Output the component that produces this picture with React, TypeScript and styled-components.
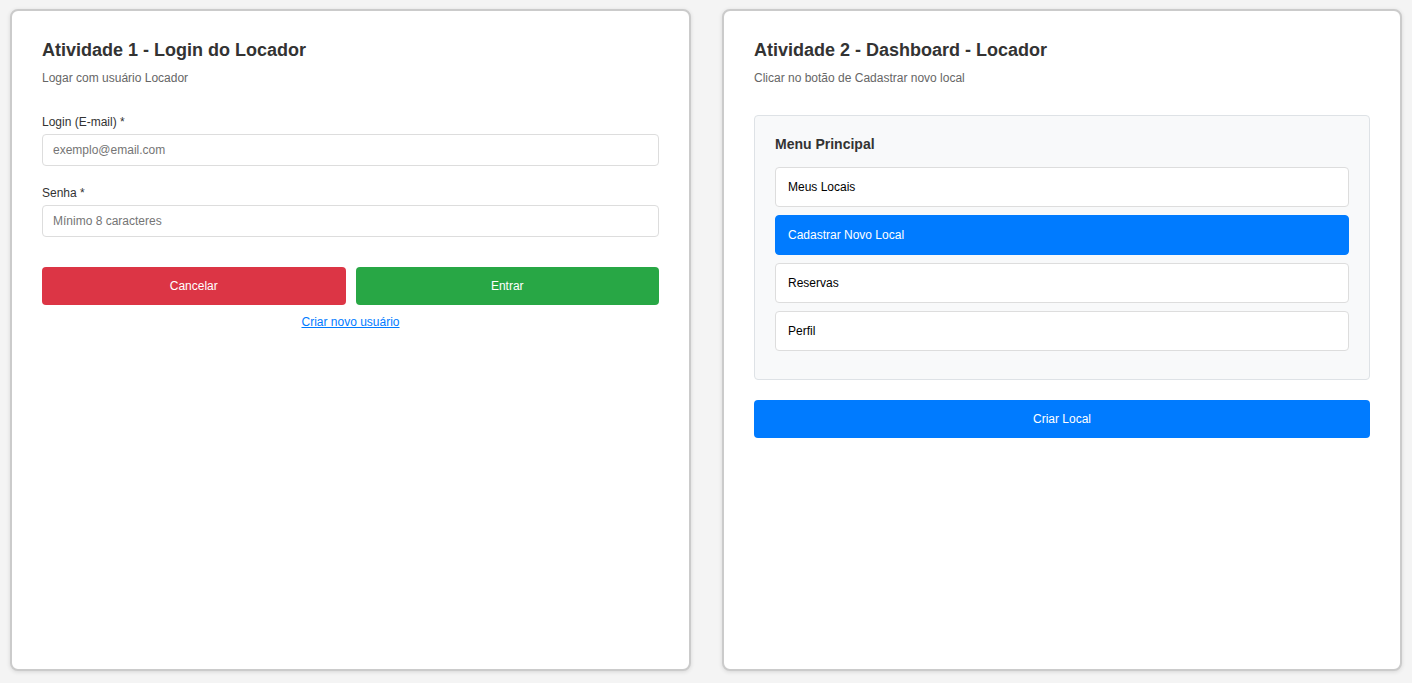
import React from "react";
import styled, { createGlobalStyle } from "styled-components";

const GlobalStyle = createGlobalStyle`
  * { box-sizing: border-box; }
  html, body { margin: 0; padding: 0; background: #f4f4f4; }
  body { font-family: "Liberation Sans", Arial, sans-serif; }
`;

const Page = styled.div`
  display: grid;
  grid-template-columns: 681px 1fr;
  gap: 31px;
  padding: 9px 10px 12px;
  height: 683px;
`;

const Card = styled.section`
  background: #fff;
  border: 2px solid #cbcbcb;
  border-radius: 8px;
  box-shadow: 0 1px 4px rgba(0, 0, 0, 0.12);
  padding: 30px;
  display: flex;
  flex-direction: column;
`;

const Title = styled.h2`
  margin: 0 0 11px;
  font-size: 18px;
  line-height: 19px;
  font-weight: 700;
  color: #333;
`;

const Subtitle = styled.p`
  margin: 0 0 30px;
  font-size: 12px;
  line-height: 14px;
  color: #666;
`;

const FormGroup = styled.div`
  display: flex;
  flex-direction: column;
  margin-bottom: 20px;
`;

const Label = styled.label`
  font-size: 12px;
  line-height: 14px;
  color: #333;
  margin-bottom: 5px;
`;

const Input = styled.input`
  height: 32px;
  padding: 0 10px;
  border: 1px solid #ddd;
  border-radius: 4px;
  font-family: inherit;
  font-size: 12px;
  color: #333;
  outline: none;
  &::placeholder { color: #757575; }
`;

const ButtonRow = styled.div`
  display: grid;
  grid-template-columns: 1fr 1fr;
  gap: 10px;
  margin-top: 10px;
`;

const Button = styled.button<{ $variant: "danger" | "success" | "primary" }>`
  height: 38px;
  border: none;
  border-radius: 4px;
  font-family: inherit;
  font-size: 12px;
  color: #fff;
  cursor: pointer;
  background: ${(p) =>
    p.$variant === "danger" ? "#dc3545" : p.$variant === "success" ? "#28a745" : "#007bff"};
`;

const LinkRow = styled.div`
  margin-top: 10px;
  text-align: center;
  font-size: 12px;
  line-height: 14px;
`;

const TextLink = styled.a`
  color: #007bff;
  text-decoration: underline;
  cursor: pointer;
`;

const MenuBox = styled.div`
  background: #f8f9fa;
  border: 1px solid #dee2e6;
  border-radius: 4px;
  padding: 20px 20px 20px;
  margin-bottom: 20px;
`;

const MenuTitle = styled.h3`
  margin: 0 0 15px;
  font-size: 14px;
  line-height: 16px;
  font-weight: 700;
  color: #333;
`;

const MenuItem = styled.div<{ $active?: boolean }>`
  height: 40px;
  display: flex;
  align-items: center;
  padding: 0 12px;
  margin-bottom: 8px;
  border: 1px solid ${(p) => (p.$active ? "#007bff" : "#ddd")};
  border-radius: 4px;
  background: ${(p) => (p.$active ? "#007bff" : "#fff")};
  color: ${(p) => (p.$active ? "#fff" : "#000")};
  font-size: 12px;
  cursor: pointer;
`;

const menuItems = [
  { label: "Meus Locais" },
  { label: "Cadastrar Novo Local", active: true },
  { label: "Reservas" },
  { label: "Perfil" },
];

export default function App() {
  return (
    <>
      <GlobalStyle />
      <Page>
        <Card>
          <Title>Atividade 1 - Login do Locador</Title>
          <Subtitle>Logar com usuário Locador</Subtitle>
          <FormGroup>
            <Label>Login (E-mail) *</Label>
            <Input type="email" placeholder="exemplo@email.com" />
          </FormGroup>
          <FormGroup>
            <Label>Senha *</Label>
            <Input type="password" placeholder="Mínimo 8 caracteres" />
          </FormGroup>
          <ButtonRow>
            <Button $variant="danger">Cancelar</Button>
            <Button $variant="success">Entrar</Button>
          </ButtonRow>
          <LinkRow>
            <TextLink>Criar novo usuário</TextLink>
          </LinkRow>
        </Card>
        <Card>
          <Title>Atividade 2 - Dashboard - Locador</Title>
          <Subtitle>Clicar no botão de Cadastrar novo local</Subtitle>
          <MenuBox>
            <MenuTitle>Menu Principal</MenuTitle>
            {menuItems.map((m) => (
              <MenuItem key={m.label} $active={m.active}>
                {m.label}
              </MenuItem>
            ))}
          </MenuBox>
          <Button $variant="primary">Criar Local</Button>
        </Card>
      </Page>
    </>
  );
}
